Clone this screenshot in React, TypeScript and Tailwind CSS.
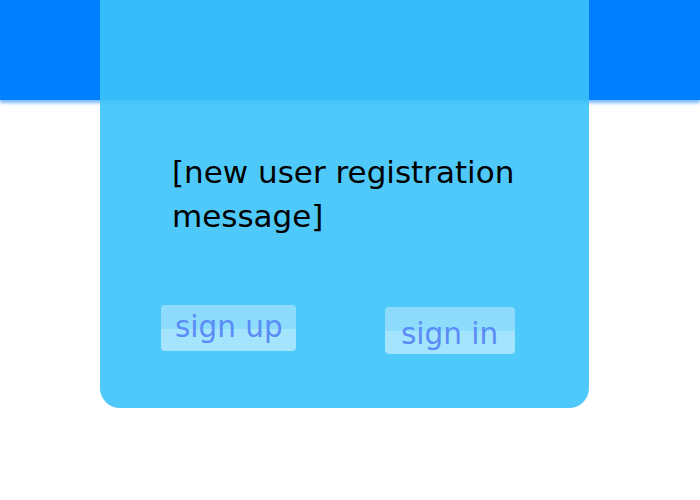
const font = { fontFamily: '"DejaVu Sans", "Noto Sans CJK JP", sans-serif' }

function GlossButton({ label, className }: { label: string; className?: string }) {
  return (
    <button
      className={`rounded-[4px] bg-[linear-gradient(to_bottom,#8ddcfb_0%,#8ddcfb_52%,#a5e4fd_52%,#a5e4fd_100%)] text-[29.5px] leading-none text-[#5a8cf7] ${className ?? ''}`}
    >
      {label}
    </button>
  )
}

export default function App() {
  return (
    <div className="relative h-[500px] w-[700px] overflow-hidden bg-white" style={font}>
      <header className="h-[100px] w-full bg-[#0080ff] shadow-[0_3px_3px_rgba(0,120,255,0.5)]" />

      <div className="absolute left-[100px] top-0 flex h-[408px] w-[489px] flex-col rounded-b-[20px] bg-[rgba(60,195,248,0.9)] pl-[61px] pr-[30px] pt-[150px]">
        <p className="ml-[11px] text-[31px] leading-[44px] text-black">
          [new user registration message]
        </p>
        <div className="mt-[67px] flex items-start">
          <GlossButton label="sign up" className="h-[46px] w-[135px] pb-[0px] pl-[14px] text-left" />
          <GlossButton label="sign in" className="ml-[89px] mt-[2px] h-[47px] w-[130px] pt-[9px] pl-[16px] text-left" />
        </div>
      </div>
    </div>
  )
}
